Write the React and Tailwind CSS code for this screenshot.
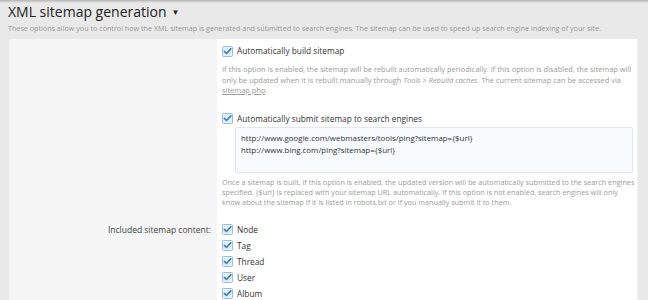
const Check = () => (
  <svg width="11" height="11" viewBox="0 0 11 11" className="shrink-0">
    <rect x="0.5" y="0.5" width="10" height="10" rx="1" fill="#e4f0fb" stroke="#9bbcdc" />
    <path d="M2.4 5.4 L4.5 7.5 L8.8 2.9" fill="none" stroke="#3a80c8" strokeWidth="1.7" strokeLinecap="round" strokeLinejoin="round" />
  </svg>
)

const CheckRow = ({ label, className = '' }) => (
  <label className={`flex items-center gap-[4px] text-[8.3px] leading-[12px] text-[#333] ${className}`}>
    <Check />
    <span>{label}</span>
  </label>
)

const content = ['Node', 'Tag', 'Thread', 'User', 'Album']

export default function App() {
  return (
    <div className="w-[648px] h-[300px] overflow-hidden bg-[#e9e9e9] font-['Open_Sans',sans-serif]">
      <div className="h-[3px] bg-gradient-to-b from-[#b4b4b4] to-[#e9e9e9]" />
      <h2 className="pl-[8px] flex items-center gap-[5px] text-[14px] leading-[18px] text-[#222]">
        XML sitemap generation
        <span className="text-[8px]">▼</span>
      </h2>
      <p className="pl-[8px] mt-[2px] text-[7.2px] leading-[10px] text-[#999]">
        These options allow you to control how the XML sitemap is generated and submitted to search engines. The sitemap can be used to speed up search engine indexing of your site.
      </p>
      <div className="ml-[9px] mt-[6px] w-[629px] border-l border-r border-[#f2f2f2]">
        <div className="flex">
          <div className="w-[207px] bg-[#f5f5f5]" />
          <div className="flex-1 bg-white pl-[5px] pr-[4px] pt-[6px] pb-[14px]">
            <CheckRow label="Automatically build sitemap" />
            <p className="mt-[7px] text-[7.45px] leading-[10.5px] text-[#9a9a9a]">
              If this option is enabled, the sitemap will be rebuilt automatically periodically. If this option is disabled, the sitemap will only be updated when it is rebuilt manually through <i>Tools</i> &gt; <i>Rebuild caches</i>. The current sitemap can be accessed via <span className="underline">sitemap.php</span>.
            </p>
            <CheckRow label="Automatically submit sitemap to search engines" className="mt-[17px]" />
            <div className="ml-[13px] mt-[2px] h-[46px] border border-[#e3e7ea] bg-[#f7fbfe] px-[5px] pt-[4px] text-[7.9px] leading-[12px] text-[#333] rounded-[2px]">
              <div>http://www.google.com/webmasters/tools/ping?sitemap={'{$url}'}</div>
              <div>http://www.bing.com/ping?sitemap={'{$url}'}</div>
            </div>
            <p className="mt-[4px] mr-[-3px] text-[7.25px] leading-[10px] text-[#9a9a9a]">
              Once a sitemap is built, if this option is enabled, the updated version will be automatically submitted to the search engines specified. {'{$url}'} is replaced with your sitemap URL automatically. If this option is not enabled, search engines will only know about the sitemap if it is listed in robots.txt or if you manually submit it to them.
            </p>
          </div>
        </div>
        <div className="flex">
          <div className="w-[207px] bg-[#f5f5f5] pr-[6px] pt-[3px] text-right text-[8.5px] leading-[12px] text-[#444]">
            Included sitemap content:
          </div>
          <div className="flex-1 bg-white pl-[5px] pt-[3px] pb-[10px] flex flex-col gap-[4px]">
            {content.map((c) => (
              <CheckRow key={c} label={c} />
            ))}
          </div>
        </div>
      </div>
    </div>
  )
}
